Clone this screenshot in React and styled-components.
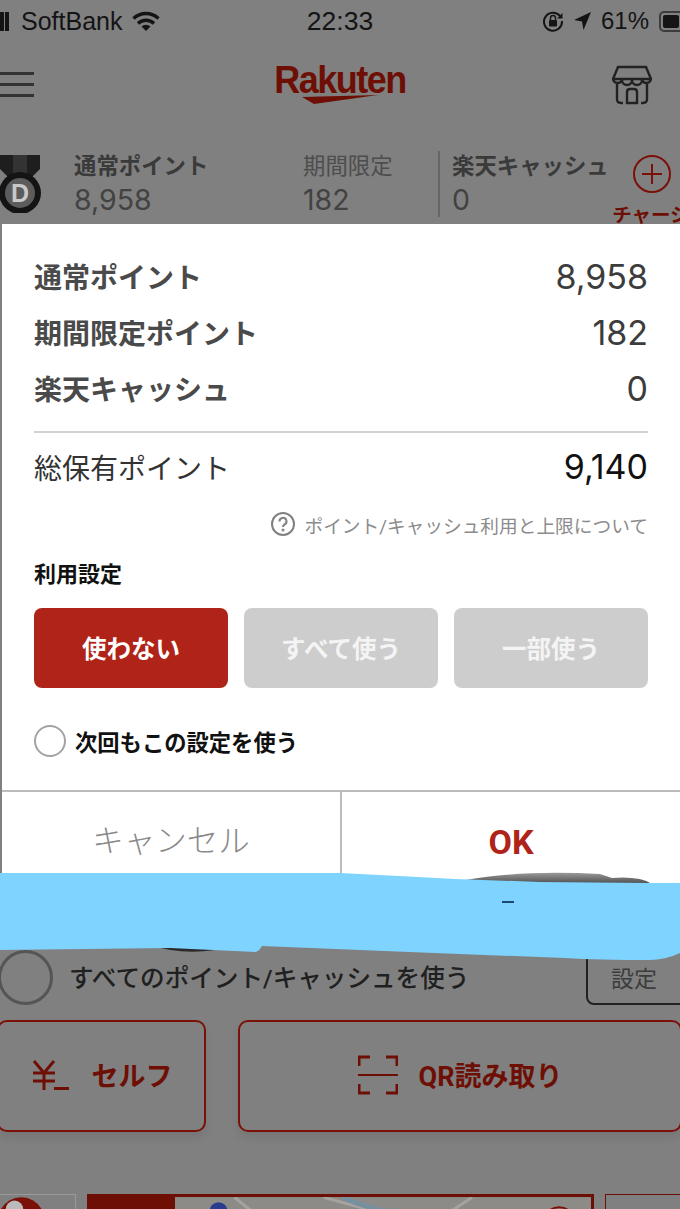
import React from 'react'
import styled, { createGlobalStyle } from 'styled-components'

const JP = `"Roboto", "Noto Sans CJK JP", sans-serif`
const NUM = `"Inter", "Liberation Sans", sans-serif`

const Global = createGlobalStyle`
  html, body { margin: 0; padding: 0; background: #808080; }
  * { box-sizing: border-box; }
`

const Page = styled.div`
  position: relative;
  width: 680px;
  height: 1209px;
  overflow: hidden;
  background: #808080;
  font-family: ${JP};
`

/* status bar */
const StatusBar = styled.div`
  display: grid;
  grid-template-columns: 1fr auto 1fr;
  align-items: center;
  height: 42px;
  color: #141414;
  font-family: "Liberation Sans", sans-serif;
  font-size: 25px;
`
const StatusLeft = styled.div`
  display: flex;
  align-items: center;
  gap: 10px;
`
const Carrier = styled.div`
  display: flex;
  align-items: center;
  gap: 12px;
`
const Bars = styled.div`
  width: 9px;
  height: 19px;
  display: flex;
  gap: 1px;
`
const Bar = styled.span`
  width: 4px;
  height: 19px;
  background: #141414;
`
const Time = styled.div`
  font-size: 26.5px;
`
const StatusRight = styled.div`
  display: flex;
  justify-content: flex-end;
  align-items: center;
  gap: 10px;
  margin-right: -14px;
  font-size: 24px;
`
const Battery = styled.div`
  width: 35px;
  height: 21px;
  border: 2px solid #3c3c3c;
  border-radius: 5px;
  padding: 2px;
`
const BatteryFill = styled.div`
  height: 100%;
  width: 60%;
  background: #141414;
  border-radius: 2px;
`

/* app header */
const Header = styled.div`
  display: flex;
  align-items: flex-start;
  justify-content: space-between;
  height: 106px;
  padding: 23px 28px 0 0;
`
const Burger = styled.div`
  display: flex;
  flex-direction: column;
  gap: 8px;
  width: 34px;
  margin-top: 7px;
`
const BurgerLine = styled.span`
  height: 3px;
  background: #333;
`
const Logo = styled.div`
  display: flex;
  flex-direction: column;
  align-items: center;
  width: 128px;
  margin-left: 34px;
`
const LogoWord = styled.div`
  color: #6e0f06;
  font-family: "Liberation Sans", sans-serif;
  font-weight: 700;
  font-size: 36px;
  line-height: 30px;
  letter-spacing: -1.5px;
  transform: scaleY(1.1);
  white-space: nowrap;
`

/* points summary behind the dialog */
const PointsRow = styled.div`
  display: flex;
  height: 76px;
  align-items: flex-start;
`
const Medal = styled.svg`
  width: 42px;
  height: 58px;
  margin-top: 7px;
  flex-shrink: 0;
`
const PointCol = styled.div`
  display: flex;
  flex-direction: column;
  flex-shrink: 0;
  width: ${p => p.$w}px;
  margin-left: ${p => p.$ml || 0}px;
  padding-top: 3px;
`
const PointLabel = styled.div`
  font-size: 22.4px;
  line-height: 30px;
  font-weight: ${p => (p.$light ? 400 : 700)};
  color: ${p => (p.$light ? '#4d4d4d' : '#3a3a3a')};
  white-space: nowrap;
`
const PointValue = styled.div`
  font-family: ${NUM};
  font-size: 28.5px;
  line-height: 38px;
  color: #424242;
`
const VRule = styled.div`
  width: 2px;
  height: 66px;
  margin: 3px 12px 0 -1px;
  background: #666;
  flex-shrink: 0;
`
const Charge = styled.div`
  display: flex;
  flex-direction: column;
  align-items: center;
  margin-left: 5px;
  margin-top: 7px;
  width: 38px;
  flex-shrink: 0;
`
const ChargeLabel = styled.div`
  color: #6e0f06;
  font-size: 19.5px;
  font-weight: 700;
  line-height: 26px;
  margin-top: 10px;
  margin-left: -2px;
  white-space: nowrap;
`
const Hidden = styled.div`
  height: 726px;
`

/* lower part of the page */
const UseRow = styled.div`
  display: flex;
  align-items: center;
  height: 55px;
`
const BigRadio = styled.div`
  width: 55px;
  height: 55px;
  border-radius: 50%;
  border: 3px solid #555;
  margin-left: -2px;
  flex-shrink: 0;
`
const UseText = styled.div`
  flex: 1;
  margin-left: 16px;
  padding-bottom: 3px;
  font-size: 24.6px;
  font-weight: 500;
  color: #202020;
  white-space: nowrap;
`
const SetButton = styled.div`
  width: 110px;
  height: 76px;
  margin-top: -21px;
  margin-right: -16px;
  padding: 19px 14px 0 0;
  display: flex;
  align-items: center;
  justify-content: center;
  border: 2px solid #222;
  border-radius: 8px;
  font-size: 23px;
  color: #3c3c3c;
  flex-shrink: 0;
`
const ActionRow = styled.div`
  display: flex;
  gap: 32px;
  margin: 15px -2px 0 -3px;
`
const ActionButton = styled.div`
  display: flex;
  align-items: center;
  justify-content: center;
  height: 112px;
  flex: ${p => (p.$wide ? '1' : '0 0 209px')};
  gap: ${p => (p.$wide ? 21 : 23)}px;
  padding-bottom: 3px;
  border: 2px solid #7a1008;
  border-radius: 10px;
  color: #6e0f06;
  font-size: 27px;
  font-weight: 700;
  box-shadow: 0 6px 10px rgba(0, 0, 0, 0.08);
`
const CardRow = styled.div`
  display: flex;
  gap: 11px;
  margin-top: 62px;
  margin-left: -8px;
`
const Card = styled.div`
  flex-shrink: 0;
  width: ${p => p.$w}px;
  height: 60px;
  border: ${p => p.$b};
  overflow: hidden;
  display: flex;
`
const CardRed = styled.div`
  width: 86px;
  background: #6e0f06;
`

/* dialog */
const Dialog = styled.div`
  position: absolute;
  left: 2px;
  top: 224px;
  width: 678px;
  height: 680px;
  background: #fff;
  display: flex;
  flex-direction: column;
`
const Body = styled.div`
  padding: 24px 32px 0 32px;
`
const Row = styled.div`
  display: flex;
  justify-content: space-between;
  align-items: center;
  height: 56px;
`
const RowLabel = styled.div`
  font-size: 28px;
  font-weight: ${p => (p.$regular ? 400 : 700)};
  color: ${p => (p.$regular ? '#333' : '#4a4a4a')};
`
const RowValue = styled.div`
  font-family: ${NUM};
  font-size: 34px;
  color: ${p => p.$c || '#3c3c3c'};
`
const Rule = styled.div`
  height: 2px;
  background: #d2d2d2;
  margin-top: 15px;
`
const TotalRow = styled(Row)`
  height: 67px;
`
const HelpRow = styled.div`
  display: flex;
  justify-content: flex-end;
  align-items: center;
  gap: 9px;
  margin-top: 12px;
  height: 24px;
  font-size: 18.7px;
  color: #8c8c8c;
  white-space: nowrap;
`
const SectionTitle = styled.div`
  margin-top: 24px;
  font-size: 22px;
  font-weight: 700;
  line-height: 30px;
  color: #111;
`
const Choices = styled.div`
  display: grid;
  grid-template-columns: repeat(3, 1fr);
  gap: 16px;
  margin-top: 18px;
`
const Choice = styled.div`
  height: 80px;
  border-radius: 8px;
  display: flex;
  align-items: center;
  justify-content: center;
  padding-bottom: 2px;
  font-size: 24.5px;
  font-weight: 700;
  color: ${p => (p.$on ? '#fff' : '#f4f4f4')};
  background: ${p => (p.$on ? '#b02318' : '#cdcdcd')};
`
const CheckRow = styled.div`
  display: flex;
  align-items: center;
  gap: 9px;
  margin-top: 37px;
  font-size: 22.3px;
  font-weight: 700;
  color: #111;
`
const Radio = styled.div`
  width: 32px;
  height: 32px;
  border-radius: 50%;
  border: 2px solid #a3a3a3;
`
const Footer = styled.div`
  display: grid;
  grid-template-columns: 340px 1fr;
  flex: 1;
  margin-top: 33px;
  border-top: 2px solid #bcbcbc;
`
const FooterButton = styled.div`
  display: flex;
  justify-content: center;
  padding-top: 28px;
  font-size: ${p => (p.$ok ? 34 : 31.5)}px;
  line-height: 44px;
  font-weight: ${p => (p.$ok ? 700 : 300)};
  color: ${p => (p.$ok ? '#b02318' : '#8a8a8a')};
  border-right: ${p => (p.$ok ? '0' : '2px solid #bcbcbc')};
`

/* the marker scribble on top of the screenshot */
const Scribble = styled.svg`
  position: absolute;
  left: 0;
  top: 860px;
`

export default function App() {
  return (
    <Page>
      <Global />
      <StatusBar>
        <StatusLeft>
          <Carrier>
            <Bars><Bar /><Bar /></Bars>
            <span>SoftBank</span>
          </Carrier>
          <svg width="28" height="22" viewBox="0 0 28 22">
            <path d="M14 21 L18.5 16.5 A6.5 6.5 0 0 0 9.5 16.5 Z" fill="#141414" />
            <path d="M6 13.5 A11.5 11.5 0 0 1 22 13.5" fill="none" stroke="#141414" strokeWidth="3.4" />
            <path d="M1.5 8.5 A18 18 0 0 1 26.5 8.5" fill="none" stroke="#141414" strokeWidth="3.4" />
          </svg>
        </StatusLeft>
        <Time>22:33</Time>
        <StatusRight>
          <svg width="22" height="22" viewBox="0 0 22 22">
            <path d="M18 6 A9 9 0 1 0 20 11" fill="none" stroke="#141414" strokeWidth="2" />
            <path d="M20.5 3 L20.5 8.5 L15 8.5 Z" fill="#141414" />
            <rect x="7" y="10" width="8" height="6.5" rx="1" fill="#141414" />
            <path d="M8.5 10 V8 A2.5 2.5 0 0 1 13.5 8 V10" fill="none" stroke="#141414" strokeWidth="1.4" />
          </svg>
          <svg width="17" height="18" viewBox="0 0 17 18">
            <path d="M17 0 L9.5 18 L8 9.5 L0 8 Z" fill="#141414" />
          </svg>
          <span>61%</span>
          <Battery><BatteryFill /></Battery>
        </StatusRight>
      </StatusBar>

      <Header>
        <Burger>
          <BurgerLine /><BurgerLine /><BurgerLine />
        </Burger>
        <Logo>
          <LogoWord>Rakuten</LogoWord>
          <svg width="76" height="9" viewBox="0 0 76 9">
            <path d="M0 2 L76 0 L12 9 Z" fill="#6e0f06" />
          </svg>
        </Logo>
        <svg width="40" height="40" viewBox="0 0 40 40" fill="none" stroke="#222" strokeWidth="2.4">
          <path d="M6 2 H34 L39 14 A4.7 4.7 0 0 1 30 15 A5 5 0 0 1 20 15 A5 5 0 0 1 10 15 A4.7 4.7 0 0 1 1 14 Z" />
          <path d="M1 14 H39" />
          <path d="M5 19 V34 Q5 38 9 38 H11 M35 19 V34 Q35 38 31 38 H29" />
          <path d="M15 38 V27 Q15 24 18 24 H22 Q25 24 25 27 V38 Z" />
        </svg>
      </Header>

      <PointsRow>
        <Medal viewBox="0 0 42 58">
          <path d="M0 0 H40 V14 L30 24 H10 L0 14 Z" fill="#1e1e1e" />
          <path d="M13 0 H27 V22 H13 Z" fill="#333" />
          <circle cx="20" cy="38" r="21" fill="#141414" />
          <circle cx="20" cy="38" r="15" fill="#5c5c5c" />
          <text x="20" y="47" textAnchor="middle" fontSize="25" fontWeight="700" fontFamily="Liberation Sans" fill="#c9c9c9">D</text>
        </Medal>
        <PointCol $w={229} $ml={32}>
          <PointLabel>通常ポイント</PointLabel>
          <PointValue>8,958</PointValue>
        </PointCol>
        <PointCol $w={136}>
          <PointLabel $light>期間限定</PointLabel>
          <PointValue>182</PointValue>
        </PointCol>
        <VRule />
        <PointCol $w={176}>
          <PointLabel>楽天キャッシュ</PointLabel>
          <PointValue>0</PointValue>
        </PointCol>
        <Charge>
          <svg width="38" height="38" viewBox="0 0 38 38" fill="none" stroke="#7a1008" strokeWidth="2" style={{ flexShrink: 0 }}>
            <circle cx="19" cy="19" r="18" />
            <path d="M19 9 V29 M9 19 H29" />
          </svg>
          <ChargeLabel>チャージ</ChargeLabel>
        </Charge>
      </PointsRow>

      <Hidden />

      <UseRow>
        <BigRadio />
        <UseText>すべてのポイント/キャッシュを使う</UseText>
        <SetButton>設定</SetButton>
      </UseRow>

      <ActionRow>
        <ActionButton>
          <svg width="38" height="30" viewBox="0 0 38 30" fill="none" stroke="#6e0f06" strokeWidth="3">
            <path d="M3 1 L13 13 L23 1 M13 13 V30 M2 13 H24 M2 21 H24" />
            <path d="M23 28.5 H38" />
          </svg>
          <span>セルフ</span>
        </ActionButton>
        <ActionButton $wide>
          <svg width="40" height="40" viewBox="0 0 40 40" fill="none" stroke="#6e0f06" strokeWidth="3">
            <path d="M1 11 V2 H12 M28 2 H39 V11 M1 29 V38 H12 M28 38 H39 V29" />
            <path d="M0 20 H40" strokeWidth="2" />
          </svg>
          <span>QR読み取り</span>
        </ActionButton>
      </ActionRow>

      <CardRow>
        <Card $w={84} $b="1px solid #999">
          <svg width="84" height="60" viewBox="0 0 84 60">
            <path d="M8 40 V14 A24 24 0 0 1 50 14 L50 40 Z" fill="#7a1008" />
            <circle cx="22" cy="14" r="9" fill="#bbb" />
          </svg>
        </Card>
        <Card $w={507} $b="3px solid #6e0f06">
          <CardRed />
          <svg width="420" height="60" viewBox="0 0 420 60">
            <rect width="420" height="60" fill="#8d8b87" />
            <path d="M60 0 L110 40 M150 0 L260 30 M300 0 L240 40" stroke="#a5a3a0" strokeWidth="3" fill="none" />
            <path d="M170 0 Q190 10 215 14" stroke="#76909f" strokeWidth="5" fill="none" />
            <circle cx="44" cy="14" r="9" fill="#2a3a8c" />
            <circle cx="388" cy="26" r="16" fill="#8d8b87" stroke="#7a1008" strokeWidth="2" />
          </svg>
        </Card>
        <Card $w={90} $b="1px solid #6e0f06" />
      </CardRow>

      <Dialog>
        <Body>
          <Row>
            <RowLabel>通常ポイント</RowLabel>
            <RowValue>8,958</RowValue>
          </Row>
          <Row>
            <RowLabel>期間限定ポイント</RowLabel>
            <RowValue>182</RowValue>
          </Row>
          <Row>
            <RowLabel>楽天キャッシュ</RowLabel>
            <RowValue>0</RowValue>
          </Row>
          <Rule />
          <TotalRow>
            <RowLabel $regular>総保有ポイント</RowLabel>
            <RowValue $c="#111">9,140</RowValue>
          </TotalRow>
          <HelpRow>
            <svg width="24" height="24" viewBox="0 0 24 24" fill="none" stroke="#808080" strokeWidth="2">
              <circle cx="12" cy="12" r="11" />
              <path d="M8.5 9.5 A3.5 3.5 0 1 1 13.5 12.5 Q12 13.3 12 15" />
              <circle cx="12" cy="18" r="0.6" />
            </svg>
            <span>ポイント/キャッシュ利用と上限について</span>
          </HelpRow>
          <SectionTitle>利用設定</SectionTitle>
          <Choices>
            <Choice $on>使わない</Choice>
            <Choice>すべて使う</Choice>
            <Choice>一部使う</Choice>
          </Choices>
          <CheckRow>
            <Radio />
            <span>次回もこの設定を使う</span>
          </CheckRow>
        </Body>
        <Footer>
          <FooterButton>キャンセル</FooterButton>
          <FooterButton $ok>OK</FooterButton>
        </Footer>
      </Dialog>

      <Scribble width="680" height="110" viewBox="0 0 680 110">
        <defs>
          <linearGradient id="smudge" x1="0" y1="0" x2="0" y2="1">
            <stop offset="0" stopColor="#999" />
            <stop offset="1" stopColor="#222" />
          </linearGradient>
        </defs>
        <path d="M466 20 Q520 10 600 14 L612 18 Q640 16 652 24 L640 30 L470 26 Z" fill="url(#smudge)" />
        <path d="M150 85 Q180 95 215 90 L200 80 Z" fill="#2a2a2a" />
        <path d="M0 13 L340 13 Q400 16 455 19 L540 22 L650 23 L680 23 L680 93 Q665 100 650 100 Q600 100 565 98 L434 93 L262 86 Q260 90 256 92 L170 88 L0 90 Z" fill="#7fd3ff" />
        <path d="M502 42 H514" stroke="#1c4a6e" strokeWidth="2" />
      </Scribble>
    </Page>
  )
}
